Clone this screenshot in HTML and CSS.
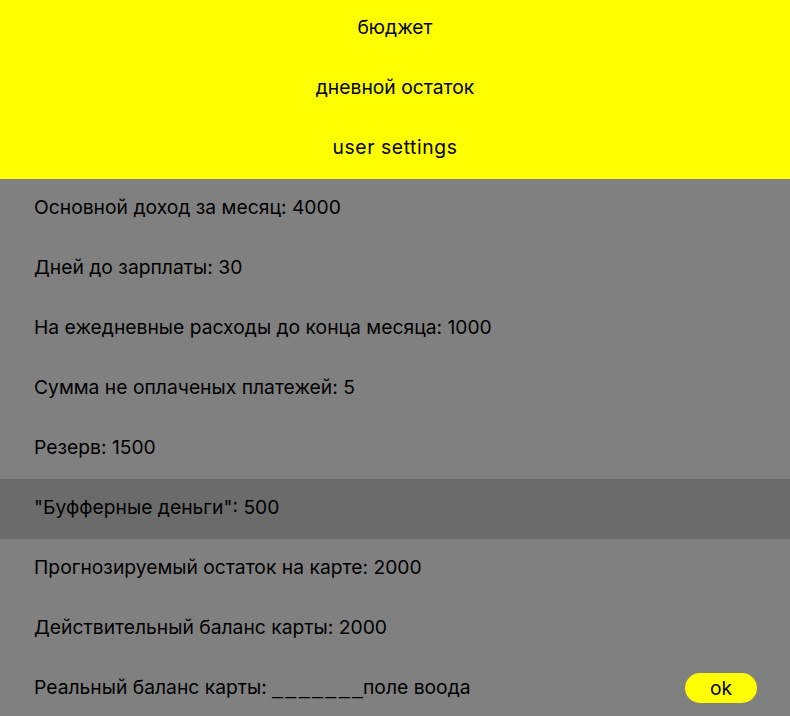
FILE: index.html
```html
<!DOCTYPE html>
<html lang="ru">
<head>
<meta charset="utf-8">
<link rel="stylesheet" href="styles.css">
</head>
<body>
<nav class="menu">
  <div class="menu-item">бюджет</div>
  <div class="menu-item">дневной остаток</div>
  <div class="menu-item menu-latin">user settings</div>
</nav>
<main class="list">
  <div class="row">Основной доход за месяц: 4000</div>
  <div class="row">Дней до зарплаты: 30</div>
  <div class="row">На ежедневные расходы до конца месяца: 1000</div>
  <div class="row">Сумма не оплаченых платежей: 5</div>
  <div class="row">Резерв: 1500</div>
  <div class="row row-active">"Буфферные деньги": 500</div>
  <div class="row">Прогнозируемый остаток на карте: 2000</div>
  <div class="row">Действительный баланс карты: 2000</div>
  <div class="row row-input">
    <span>Реальный баланс карты: <span class="blank">______</span><span class="blank-last">_</span>поле воода</span>
    <button class="ok">ok</button>
  </div>
</main>
</body>
</html>
```
FILE: styles.css
```css
html, body {
  margin: 0;
  padding: 0;
}
body {
  background: #808080;
  font-family: "Inter", "Liberation Sans", Arial, sans-serif;
  font-size: 19.3px;
  color: #000;
}
.menu {
  background: #ffff00;
  display: flex;
  flex-direction: column;
  height: 179px;
}
.menu-item {
  flex: 1;
  display: flex;
  align-items: center;
  justify-content: center;
  padding-bottom: 5px;
}
.menu-latin {
  letter-spacing: 0.6px;
}
.list {
  display: flex;
  flex-direction: column;
}
.row {
  height: 60px;
  display: flex;
  align-items: center;
  padding: 0 33px 5px 34px;
  box-sizing: border-box;
}
.row-active {
  background: #6b6b6b;
}
.row-input {
  justify-content: space-between;
}
.blank,
.blank-last {
  font-family: "Liberation Sans", Arial, sans-serif;
}
.blank {
  letter-spacing: 2.6px;
}
.ok {
  width: 72px;
  height: 30px;
  margin-top: 3px;
  border: none;
  border-radius: 15px;
  background: #ffff00;
  font-family: inherit;
  font-size: 19.3px;
  color: #000;
  padding: 0;
}
```
